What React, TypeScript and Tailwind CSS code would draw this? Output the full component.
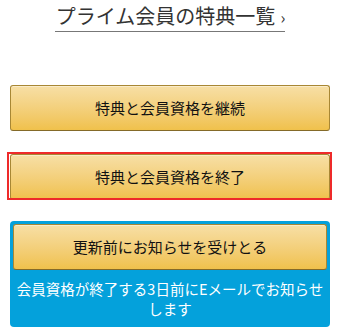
export default function App() {
  const btn =
    "w-full h-[46px] flex items-center justify-center rounded-[3px] border border-[#a88734] border-b-[#846a29] bg-gradient-to-b from-[#f7dfa5] to-[#f0c14b] text-[15px] text-[#111] shadow-[inset_0_1px_0_rgba(255,255,255,0.4)]";

  return (
    <div
      className="w-[340px] h-[329px] bg-white px-[10px] overflow-hidden"
      style={{ fontFamily: '"Noto Sans CJK JP", "Noto Sans", sans-serif' }}
    >
      {/* titre avec lien */}
      <div className="flex justify-center pt-[2px]">
        <span className="border-b border-[#777] text-[20px] leading-[27px] text-[#333] pl-[1px]">
          プライム会員の特典一覧<span className="ml-[5px] text-[16px]">›</span>
        </span>
      </div>

      <div className="mt-[53px]">
        <button className={btn}>特典と会員資格を継続</button>
      </div>

      {/* bouton encadré en rouge */}
      <div className="relative mt-[23px]">
        <button className={btn}>特典と会員資格を終了</button>
        <div className="absolute left-[-3px] right-[-2px] top-[-2px] bottom-[0px] border-2 border-[#ee2a2a] pointer-events-none" />
      </div>

      {/* bloc bleu notification */}
      <div className="mt-[21px] rounded-[4px] bg-[#04a1db] p-[3px] pb-[4px]">
        <button className={btn + " h-[44px]"}>更新前にお知らせを受けとる</button>
        <p className="text-white text-[14.5px] leading-[20px] text-center px-[3px] pt-[9px] pb-[4px]">
          会員資格が終了する3日前にEメールでお知らせします
        </p>
      </div>
    </div>
  );
}
